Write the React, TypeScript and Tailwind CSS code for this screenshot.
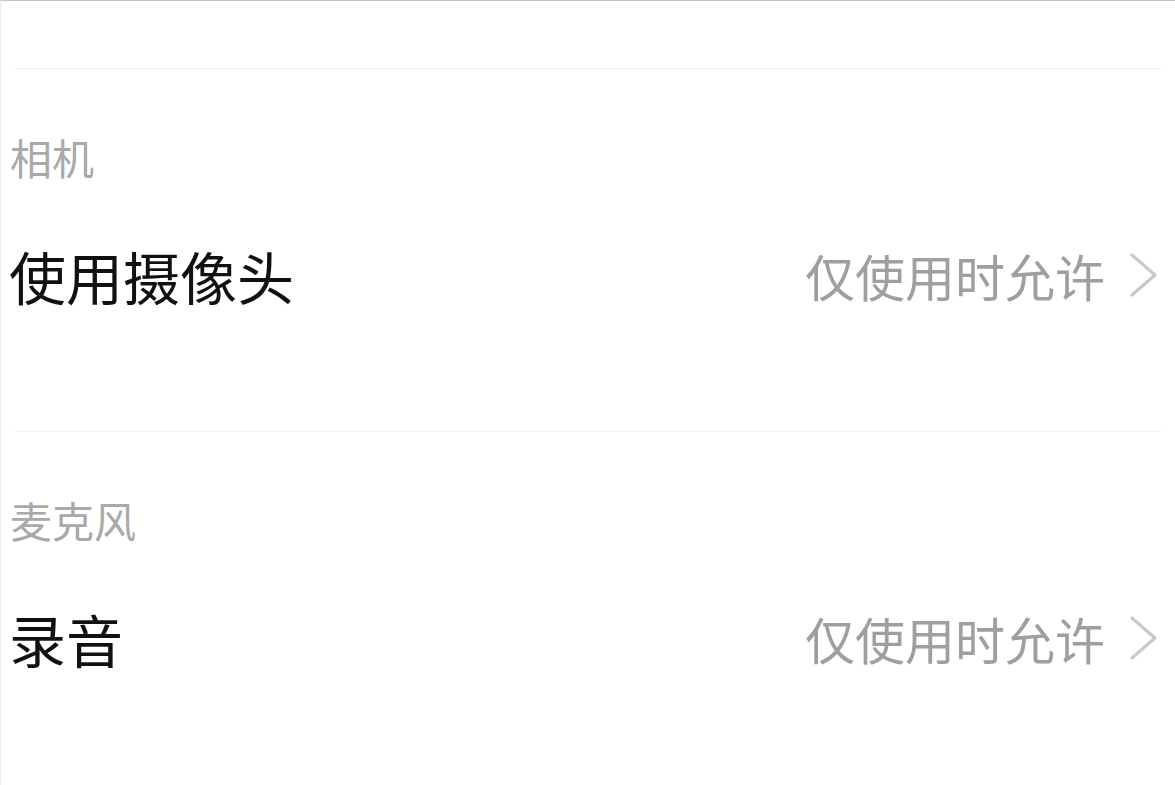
const cjk = "font-['Noto_Sans_CJK_SC','Noto_Sans',sans-serif]"

function Chevron() {
  return (
    <svg width="30" height="46" viewBox="0 0 30 46" fill="none" className="shrink-0">
      <path d="M3 3 L26 23 L3 43" stroke="#c9c9c9" strokeWidth="3.2" strokeLinecap="round" strokeLinejoin="round" />
    </svg>
  )
}

function Section({ label, title, value }: { label: string; title: string; value: string }) {
  return (
    <div>
      <div className="mx-[13px] h-px bg-[#f1f1f1]" />
      <div className="pl-[9px] pt-[67px] text-[42px] leading-[42px] text-[#a9a9a9]">{label}</div>
      <div className="flex h-[200px] items-center justify-between pb-[6px] pl-[8px] pr-[16px]">
        <span className="text-[57px] leading-none text-[#111]">{title}</span>
        <div className="flex items-center gap-[24px]">
          <span className="text-[50px] leading-none text-[#9f9f9f]">{value}</span>
          <Chevron />
        </div>
      </div>
      <div className="h-[53px]" />
    </div>
  )
}

export default function App() {
  return (
    <div className={`h-[785px] w-[1175px] overflow-hidden border-t border-t-[#c4c4c4] border-l border-l-[#ececec] bg-white ${cjk}`}>
      <div className="h-[67px]" />
      <Section label="相机" title="使用摄像头" value="仅使用时允许" />
      <Section label="麦克风" title="录音" value="仅使用时允许" />
    </div>
  )
}
